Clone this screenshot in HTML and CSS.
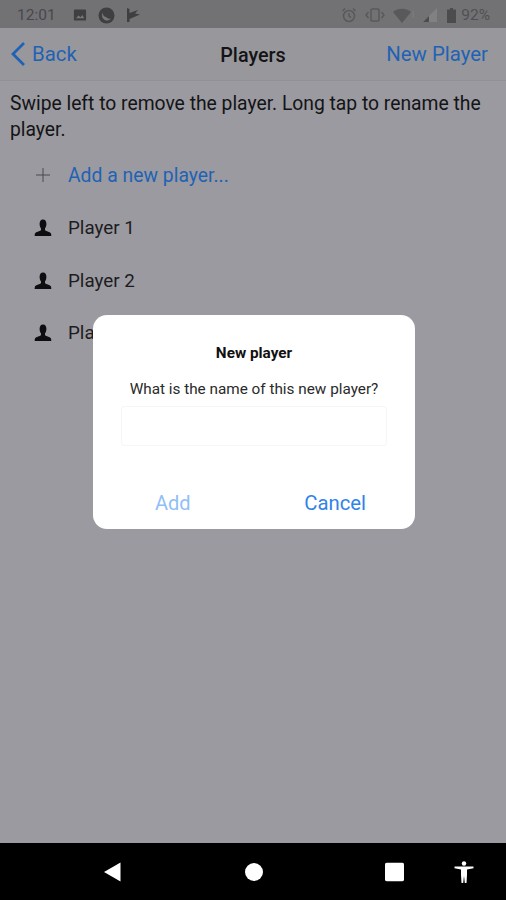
FILE: index.html
```html
<!DOCTYPE html>
<html lang="en">
<head>
    <meta charset="UTF-8">
    <meta name="viewport" content="width=device-width, initial-scale=1.0">
    <title>Players</title>
    <link rel="stylesheet" href="styles.css">
</head>
<body>
    <div class="status-bar">
        <div class="status-left">
            <span class="clock">12:01</span>
            <svg class="status-icon" width="14" height="14" viewBox="0 0 15 15"><path d="M1 2.500a1 1 0 0 1 1-1h11a1 1 0 0 1 1 1v10a1 1 0 0 1-1 1H2a1 1 0 0 1-1-1z" fill="#3f3f42"/><path d="M3 11l3-3 2 2 2-2.500 2 3.500z" fill="#77777a"/></svg>
            <svg class="status-icon" width="17" height="17" viewBox="0 0 17 17"><circle cx="8.500" cy="8.500" r="8" fill="#3f3f42"/><path d="M5 5.500a5 5 0 0 0 8 6 4.500 4.500 0 0 1-5-1.500 4 4 0 0 1-3-4.500z" fill="#77777a"/></svg>
            <svg class="status-icon" width="14" height="14" viewBox="0 0 14 14"><path d="M1 0v14h2.500v-3L14 6.500 9 5.500l3-3.500-8.500 3V1z" fill="#3f3f42"/></svg>
        </div>
        <div class="status-right">
            <svg width="16" height="16" viewBox="0 0 16 16" fill="none" stroke="#59595c" stroke-width="1.500"><circle cx="8" cy="9" r="5.500"/><path d="M8 6v3l2 1.500M1.500 4L4 1.500M14.500 4L12 1.500"/></svg>
            <svg width="20" height="14" viewBox="0 0 20 14" fill="none" stroke="#59595c" stroke-width="1.500"><rect x="6" y="1" width="8" height="12" rx="1"/><path d="M3.500 4L1 7l2.500 3M16.500 4L19 7l-2.500 3"/></svg>
            <svg width="22" height="15" viewBox="0 0 22 15"><path d="M0 4a14 14 0 0 1 18 0l-9 11z" fill="#59595c"/><rect x="19.500" y="3" width="1.500" height="7" fill="#7b7b7e"/></svg>
            <svg width="15" height="14" viewBox="0 0 15 14"><path d="M14 0v14H0z" fill="#818184"/><path d="M6 8v6H0z" fill="#4c4c4f"/></svg>
            <svg class="battery" width="9" height="15" viewBox="0 0 9 15"><path d="M3 0h3v1.500h3V15H0V1.500h3z" fill="#4c4c4f"/></svg>
            <span class="battery-text">92%</span>
        </div>
    </div>

    <div class="nav-bar">
        <a class="nav-back">
            <svg width="16" height="26" viewBox="0 0 16 26" fill="none" stroke="#1f62b5" stroke-width="2.800"><path d="M14 2L3 13l11 11"/></svg>
            Back
        </a>
        <span class="nav-title">Players</span>
        <a class="nav-action">New Player</a>
    </div>

    <div class="content">
        <p class="hint">Swipe left to remove the player. Long tap to rename the player.</p>
        <ul class="player-list">
            <li class="player-row">
                <svg class="row-icon" width="18" height="18" viewBox="0 0 18 18" fill="none" stroke="#4a4a4d" stroke-width="1"><path d="M9 2v14M2 9h14"/></svg>
                <span class="add-link">Add a new player...</span>
            </li>
            <li class="player-row">
                <svg class="row-icon" width="18" height="18" viewBox="0 0 18 18"><use href="#person"/></svg>
                <span>Player 1</span>
            </li>
            <li class="player-row">
                <svg class="row-icon" width="18" height="18" viewBox="0 0 18 18"><use href="#person"/></svg>
                <span>Player 2</span>
            </li>
            <li class="player-row">
                <svg class="row-icon" width="18" height="18" viewBox="0 0 18 18"><use href="#person"/></svg>
                <span>Player 3</span>
            </li>
        </ul>
    </div>

    <div class="bottom-bar">
        <svg class="bottom-back" width="18" height="21" viewBox="0 0 18 21"><path d="M17.500 1v19L1 10.500z" fill="#fff"/></svg>
        <svg class="bottom-home" width="18" height="18" viewBox="0 0 18 18"><circle cx="9" cy="9" r="9" fill="#fff"/></svg>
        <svg class="bottom-recent" width="19" height="19" viewBox="0 0 19 19"><rect width="19" height="19" rx="2" fill="#fff"/></svg>
        <svg class="bottom-access" width="20" height="22" viewBox="0 0 20 22"><circle cx="10" cy="2.500" r="2.200" fill="#fff"/><path d="M0.500 5.500h19v1.800L13 8.500V14l-.5 8h-1.700l-.8-7-.8 7H7.500L7 14V8.500L.5 7.300z" fill="#fff"/></svg>
    </div>

    <div class="dialog">
        <div class="dialog-title">New player</div>
        <div class="dialog-text">What is the name of this new player?</div>
        <div class="dialog-input"></div>
        <div class="dialog-buttons">
            <span class="btn-add">Add</span>
            <span class="btn-cancel">Cancel</span>
        </div>
    </div>

    <svg class="defs" width="0" height="0">
        <symbol id="person" viewBox="0 0 18 18">
            <path d="M9 0.500c2.400 0 3.400 2 3.400 4.300 0 2-.6 3.700-1.400 4.700v1.800c1 .8 5.500 2 6 3.200.3.800.3 2 .3 2.500H.7c0-.5 0-1.700.3-2.500.5-1.200 5-2.400 6-3.200V9.500c-.8-1-1.400-2.700-1.400-4.700C5.600 2.500 6.600.5 9 .5z" fill="#0e0e10"/>
        </symbol>
    </svg>
</body>
</html>
```

FILE: styles.css
```css
* {
    box-sizing: border-box;
}
body {
    font-family: Roboto, "Liberation Sans", sans-serif;
    display: flex;
    flex-direction: column;
    height: 900px;
    margin: 0;
    overflow: hidden;
    position: relative;
    background-color: #9b9aa0;
    color: #141416;
}
.status-bar {
    display: flex;
    justify-content: space-between;
    align-items: center;
    height: 28px;
    padding: 2px 16px 0 17px;
    background-color: #727275;
    color: #48484b;
    font-size: 15.500px;
}
.status-left,
.status-right {
    display: flex;
    align-items: center;
}
.clock {
    margin-right: 17px;
}
.status-icon {
    margin-right: 11px;
}
.status-right {
    gap: 8px;
}
.battery {
    margin-left: 1px;
}
.battery-text {
    margin-left: -3px;
    color: #505053;
}
.nav-bar {
    display: flex;
    justify-content: space-between;
    align-items: center;
    position: relative;
    height: 53px;
    padding: 0 18px 0 10px;
    background-color: #98989c;
    border-bottom: 1px solid #919195;
    font-size: 20.400px;
    color: #1f62b5;
}
.nav-back {
    display: flex;
    align-items: center;
    gap: 6px;
}
.nav-title {
    position: absolute;
    left: 0;
    right: 0;
    padding-top: 2px;
    text-align: center;
    font-size: 19.800px;
    font-weight: 500;
    color: #141416;
}
.content {
    flex: 1;
}
.hint {
    margin: 10px 10px 0;
    font-size: 19.300px;
    line-height: 26px;
}
.player-list {
    list-style: none;
    margin: 6px 0 0;
    padding: 0;
}
.player-row {
    display: flex;
    align-items: center;
    height: 52.700px;
    padding-left: 34px;
    font-size: 18.800px;
    color: #1c1c1f;
}
.row-icon {
    margin-right: 16px;
}
.add-link {
    font-size: 19.350px;
    color: #1f62b5;
}
.bottom-bar {
    position: relative;
    height: 57px;
    background-color: #000;
}
.bottom-bar svg {
    position: absolute;
    top: 50%;
    transform: translateY(-50%);
}
.bottom-back {
    left: 103px;
}
.bottom-home {
    left: 245px;
}
.bottom-recent {
    left: 385px;
}
.bottom-access {
    left: 454px;
}
.dialog {
    position: absolute;
    left: 93px;
    top: 315px;
    display: flex;
    flex-direction: column;
    align-items: center;
    width: 322px;
    height: 214px;
    padding: 29px 28px 0;
    background-color: #fff;
    border-radius: 14px;
    font-size: 15.300px;
}
.dialog-title {
    font-size: 15.300px;
    font-weight: 700;
    line-height: 18px;
    color: #111;
}
.dialog-text {
    margin-top: 18px;
    line-height: 18px;
    color: #2a2a2a;
}
.dialog-input {
    width: 266px;
    height: 40px;
    margin-top: 8px;
    border: 1px solid #f6f6f6;
    border-radius: 3px;
}
.dialog-buttons {
    display: flex;
    justify-content: space-between;
    width: 100%;
    margin-top: 45px;
    padding: 0 21px 0 34px;
    font-size: 20.300px;
}
.btn-add {
    font-size: 20px;
    color: #90c0f7;
}
.btn-cancel {
    color: #2f83ea;
}
.defs {
    position: absolute;
}
```
